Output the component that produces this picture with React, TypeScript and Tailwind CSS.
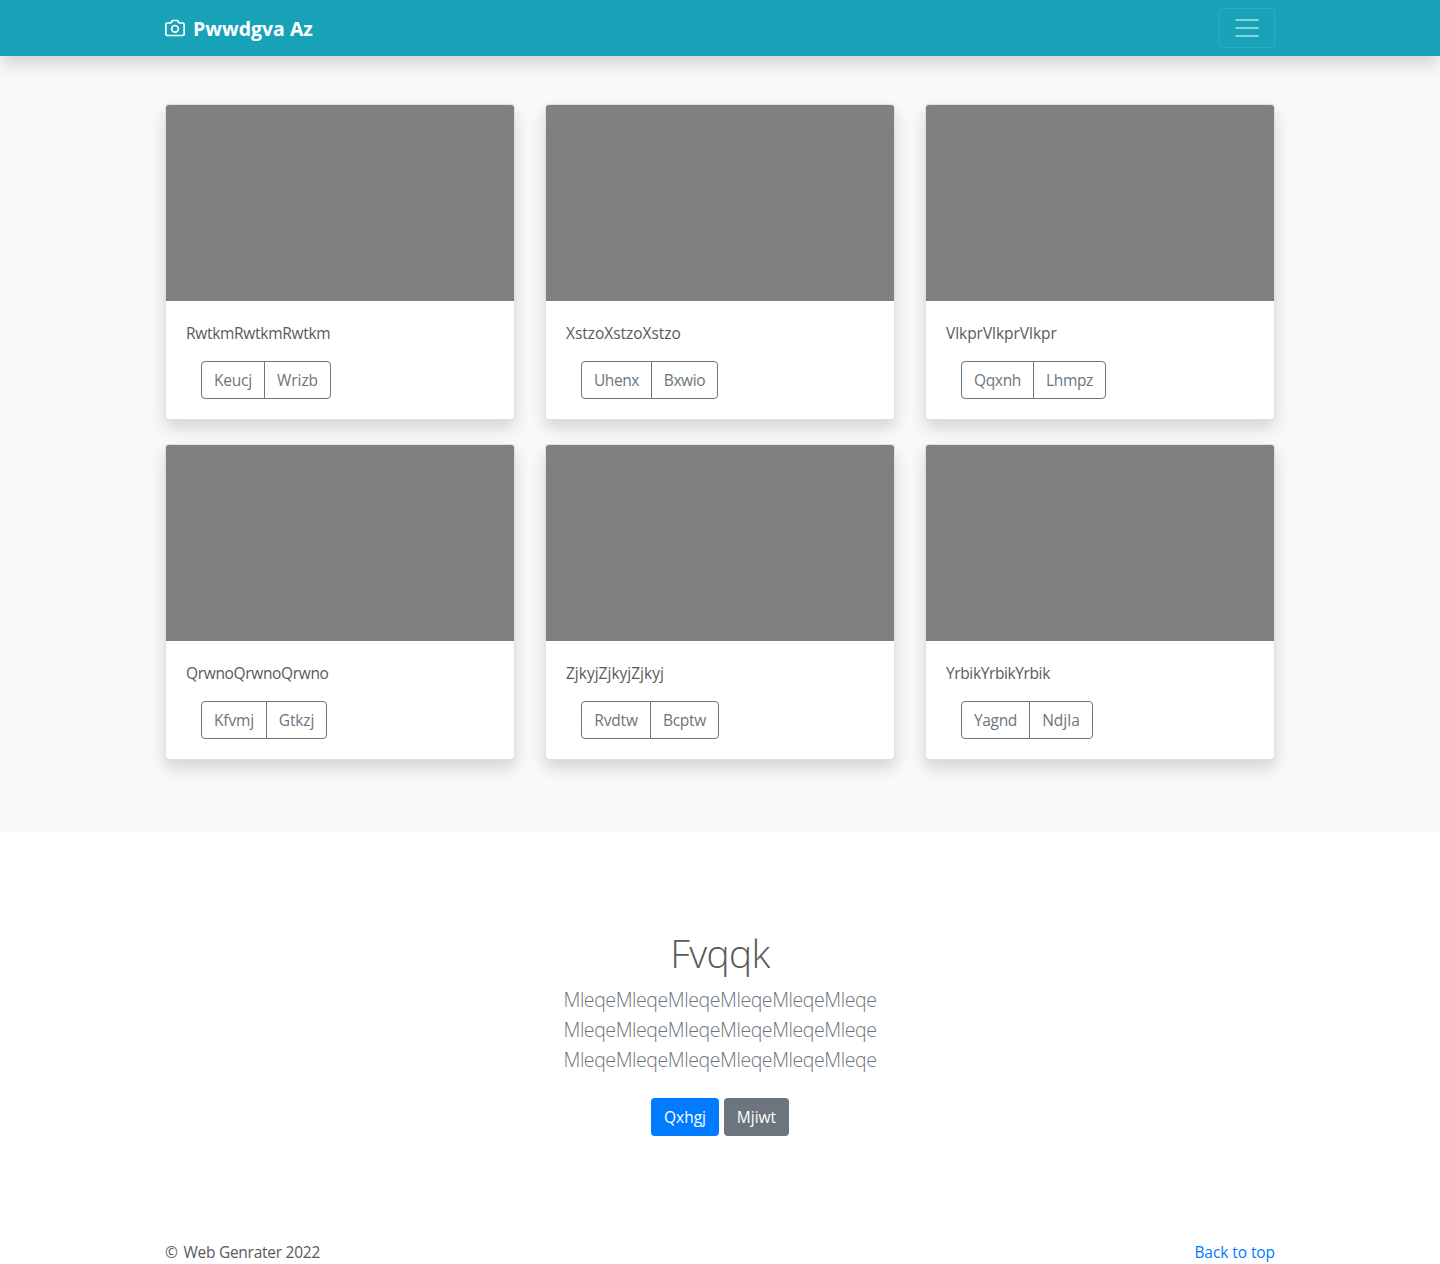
type Action = { label: string; className: string };
type Photo = { title: string; titleClass: string; actions: [Action, Action] };

const photos: Photo[] = [
  {
    title: "RwtkmRwtkmRwtkm",
    titleClass: "tracking-[-0.3px]",
    actions: [
      { label: "Keucj", className: "w-[64px] tracking-[-0.2px]" },
      { label: "Wrizb", className: "w-[67px] tracking-[-0.05px]" },
    ],
  },
  {
    title: "XstzoXstzoXstzo",
    titleClass: "tracking-[-0.04px]",
    actions: [
      { label: "Uhenx", className: "w-[71px] tracking-[-0.4px]" },
      { label: "Bxwio", className: "w-[67px] tracking-[-0.38px]" },
    ],
  },
  {
    title: "VlkprVlkprVlkpr",
    titleClass: "tracking-[-0.04px]",
    actions: [
      { label: "Qqxnh", className: "w-[73px] tracking-[-0.33px]" },
      { label: "Lhmpz", className: "w-[73px] tracking-[-0.33px]" },
    ],
  },
  {
    title: "QrwnoQrwnoQrwno",
    titleClass: "tracking-[-0.34px]",
    actions: [
      { label: "Kfvmj", className: "w-[66px] tracking-[-0.15px]" },
      { label: "Gtkzj", className: "w-[61px] tracking-[-0.12px]" },
    ],
  },
  {
    title: "ZjkyjZjkyjZjkyj",
    titleClass: "tracking-normal",
    actions: [
      { label: "Rvdtw", className: "w-[70px] tracking-[-0.16px]" },
      { label: "Bcptw", className: "w-[69px] tracking-[-0.27px]" },
    ],
  },
  {
    title: "YrbikYrbikYrbik",
    titleClass: "tracking-[-0.38px]",
    actions: [
      { label: "Yagnd", className: "w-[69px] tracking-[-0.33px]" },
      { label: "Ndjla", className: "w-[64px] tracking-normal" },
    ],
  },
];

function CameraIcon() {
  return (
    <svg
      className="mr-2 size-5"
      viewBox="0 0 24 24"
      fill="none"
      stroke="currentColor"
      strokeWidth="2"
      strokeLinecap="round"
      strokeLinejoin="round"
      aria-hidden="true"
    >
      <path d="M23 19a2 2 0 0 1-2 2H3a2 2 0 0 1-2-2V8a2 2 0 0 1 2-2h4l2-3h6l2 3h4a2 2 0 0 1 2 2z" />
      <circle cx="12" cy="13" r="4" />
    </svg>
  );
}

function Navbar() {
  return (
    <header className="relative z-10 h-14 bg-[#17a2b8] shadow-[0_8px_16px_rgba(0,0,0,0.15)]">
      <div className="mx-auto flex h-full w-[1110px] items-center justify-between text-white">
        <a href="#" className="flex items-center">
          <CameraIcon />
          <strong className="pt-0.5 text-[19.5px] leading-[30px] font-bold">Pwwdgva Az</strong>
        </a>
        <button
          aria-label="Toggle navigation"
          className="flex h-10 w-14 items-center justify-center rounded border border-white/10"
        >
          <svg className="size-[30px]" viewBox="0 0 30 30" fill="none" aria-hidden="true">
            <path
              stroke="rgba(255,255,255,0.5)"
              strokeLinecap="round"
              strokeMiterlimit="10"
              strokeWidth="2"
              d="M4 7h22M4 15h22M4 23h22"
            />
          </svg>
        </button>
      </div>
    </header>
  );
}

function PhotoCard({ photo }: { photo: Photo }) {
  const [first, second] = photo.actions;
  return (
    <article className="rounded border border-black/[.125] bg-white shadow-[0_8px_16px_rgba(0,0,0,0.15)]">
      <div className="h-[196px] rounded-t-[3px] bg-[#808080]" />
      <div className="p-5">
        <p className={`mb-4 leading-6 ${photo.titleClass}`}>{photo.title}</p>
        <div className="flex pl-[15px] text-[#6c757d]">
          <button
            className={`h-[38px] rounded-l border border-[#6c757d] text-center whitespace-nowrap ${first.className}`}
          >
            {first.label}
          </button>
          <button
            className={`-ml-px h-[38px] rounded-r border border-[#6c757d] text-center whitespace-nowrap ${second.className}`}
          >
            {second.label}
          </button>
        </div>
      </div>
    </article>
  );
}

export default function App() {
  return (
    <div className="min-h-[1264px] bg-white font-['Open_Sans',sans-serif] text-[15.5px] leading-6 text-[#5a5a5a]">
      <Navbar />
      <main>
        <section className="bg-[#f8f9fa] pt-12 pb-[72px]">
          <div className="mx-auto grid w-[1110px] grid-cols-3 gap-x-[30px] gap-y-6">
            {photos.map((photo) => (
              <PhotoCard key={photo.title} photo={photo} />
            ))}
          </div>
        </section>
        <section className="pt-[97px] text-center">
          <h1 className="mb-2 text-[39px] leading-[48px] font-light tracking-[-0.7px]">Fvqqk</h1>
          <p className="text-[19.5px] leading-[30px] font-light tracking-[-0.42px] text-[#6c757d]">
            MleqeMleqeMleqeMleqeMleqeMleqe
            <br />
            MleqeMleqeMleqeMleqeMleqeMleqe
            <br />
            MleqeMleqeMleqeMleqeMleqeMleqe
          </p>
          <div className="mt-[23px] flex justify-center gap-[5px] text-white">
            <button className="h-[38px] w-[68px] rounded bg-[#007bff]">Qxhgj</button>
            <button className="h-[38px] w-[65px] rounded bg-[#6c757d]">Mjiwt</button>
          </div>
        </section>
      </main>
      <footer className="mx-auto mt-[104px] flex w-[1110px] justify-between">
        <p className="tracking-[-0.26px]">
          <span className="mr-0.5">©</span> Web Genrater 2022
        </p>
        <a href="#" className="tracking-[-0.08px] text-[#007bff]">
          Back to top
        </a>
      </footer>
    </div>
  );
}
